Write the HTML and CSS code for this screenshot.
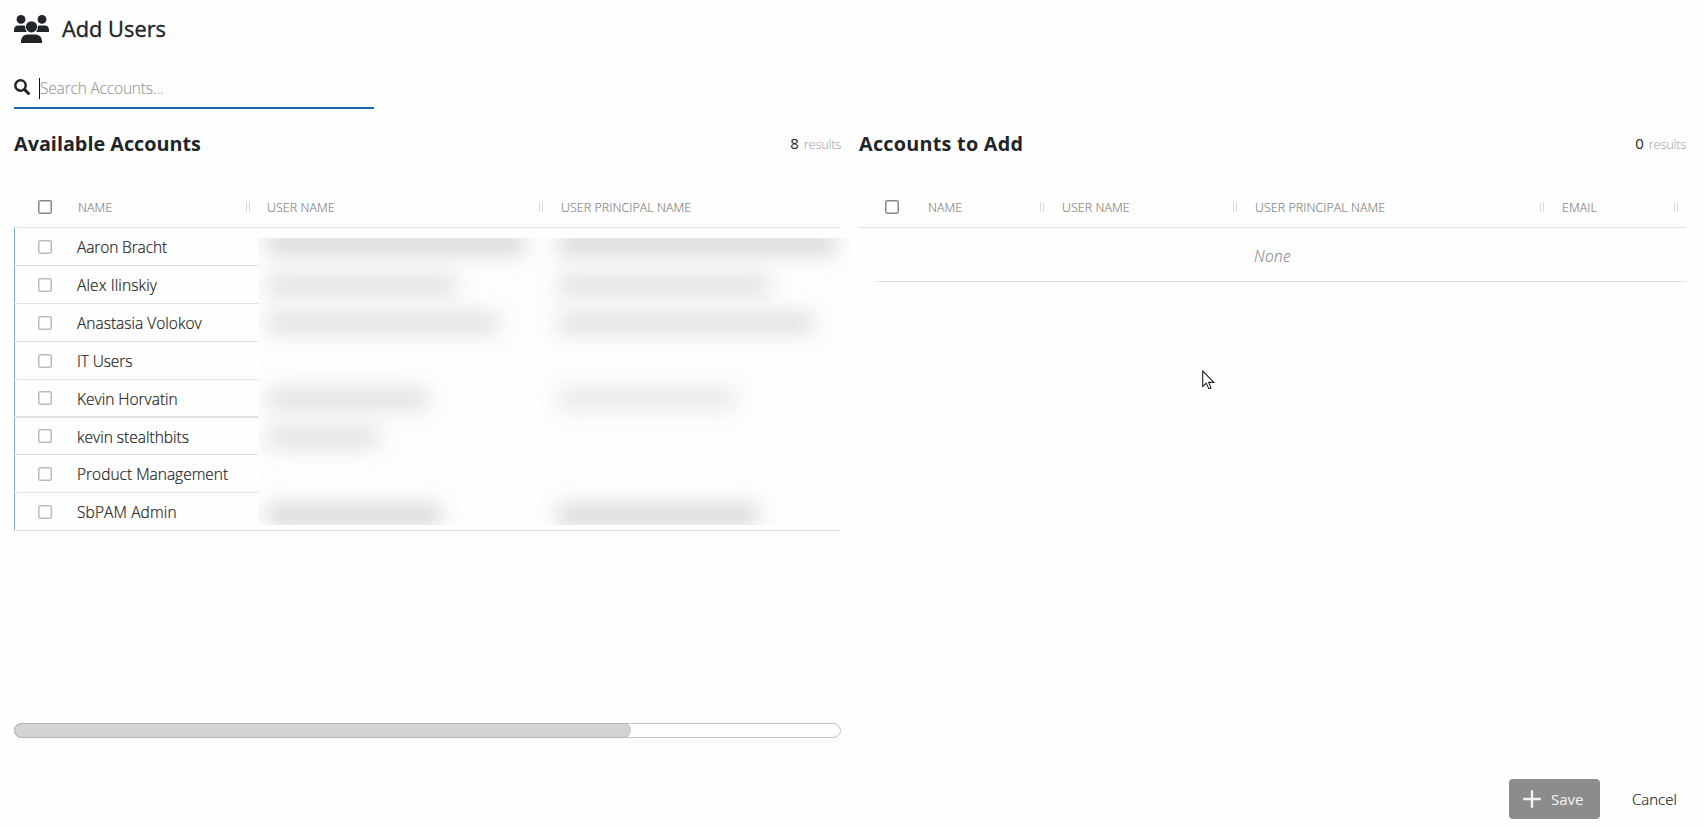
FILE: index.html
```html
<!DOCTYPE html>
<html lang="en">
<head>
<meta charset="utf-8">
<title>Add Users</title>
<link rel="stylesheet" href="styles.css">
</head>
<body>
<main class="page">
  <header class="title-bar">
    <svg class="users-icon" viewBox="0 0 35 28" fill="currentColor">
      <circle cx="7" cy="4.4" r="4.4"/><circle cx="28" cy="4.4" r="4.4"/>
      <path d="M0 17v-2.200A4.600 4.600 0 0 1 4.600 10.400H9.200c.8 0 1.500.2 2.100.5a7 7 0 0 0 1.500 6.100z"/>
      <path d="M35 17v-2.200a4.600 4.600 0 0 0-4.600-4.400h-4.600c-.8 0-1.500.2-2.100.5a7 7 0 0 1-1.500 6.100z"/>
      <circle cx="17.500" cy="11.800" r="5.600"/>
      <path d="M7 28v-2.300a6.500 6.500 0 0 1 6.500-6.300h8a6.500 6.500 0 0 1 6.500 6.300V28z"/>
    </svg>
    <h1 class="title">Add Users</h1>
  </header>
  <div class="search">
    <svg class="search-icon" viewBox="0 0 16 16" fill="none" stroke="currentColor"><circle cx="6.500" cy="6.500" r="5.200" stroke-width="2.500"/><path d="M10.400 10.400L14.500 14.500" stroke-width="3" stroke-linecap="round"/></svg>
    <span class="caret"></span><span class="placeholder">Search Accounts...</span>
  </div>
  <div class="panels">
    <section class="panel">
      <div class="panel-head"><h2 class="panel-title">Available Accounts</h2><span class="count"><b class="num">8</b><span class="results">results</span></span></div>
      <div class="columns columns-left">
        <span class="check dark"></span>
        <span class="col"><span class="label">NAME</span><i class="grip"></i></span>
        <span class="col"><span class="label">USER NAME</span><i class="grip"></i></span>
        <span class="col"><span class="label">USER PRINCIPAL NAME</span></span>
      </div>
      <div class="rows">
        <div class="row"><span class="check"></span><span class="name tight">Aaron Bracht</span></div>
        <div class="row"><span class="check"></span><span class="name wide">Alex Ilinskiy</span></div>
        <div class="row"><span class="check"></span><span class="name">Anastasia Volokov</span></div>
        <div class="row"><span class="check"></span><span class="name tight">IT Users</span></div>
        <div class="row thick"><span class="check"></span><span class="name">Kevin Horvatin</span></div>
        <div class="row short"><span class="check"></span><span class="name">kevin stealthbits</span></div>
        <div class="row"><span class="check"></span><span class="name">Product Management</span></div>
        <div class="row"><span class="check"></span><span class="name wide">SbPAM Admin</span></div>
        <div class="redacted">
          <div class="smudges"><i class="strong" style="width:256px"></i><i class="strong" style="width:276px"></i></div>
          <div class="smudges"><i style="width:188px"></i><i style="width:210px"></i></div>
          <div class="smudges"><i style="width:230px"></i><i style="width:254px"></i></div>
          <div class="smudges"></div>
          <div class="smudges"><i style="width:159px"></i><i class="faint" style="width:176px"></i></div>
          <div class="smudges"><i style="width:110px"></i></div>
          <div class="smudges"></div>
          <div class="smudges last"><i class="strong" style="width:172px"></i><i class="strong" style="width:198px"></i></div>
        </div>
      </div>
      <div class="scrollbar"><div class="thumb"></div></div>
    </section>
    <section class="panel">
      <div class="panel-head"><h2 class="panel-title adding">Accounts to Add</h2><span class="count"><b class="num">0</b><span class="results">results</span></span></div>
      <div class="columns columns-right">
        <span class="check dark"></span>
        <span class="col"><span class="label">NAME</span><i class="grip"></i></span>
        <span class="col"><span class="label">USER NAME</span><i class="grip"></i></span>
        <span class="col"><span class="label">USER PRINCIPAL NAME</span><i class="grip"></i></span>
        <span class="col"><span class="label">EMAIL</span><i class="grip"></i></span>
      </div>
      <div class="empty"><span class="none">None</span></div>
    </section>
  </div>
  <footer class="actions">
    <button class="save"><svg class="plus" viewBox="0 0 18 18"><path d="M9 1.200V16.800M1.200 9H16.800" stroke="currentColor" stroke-width="2.400" stroke-linecap="round"/></svg><span>Save</span></button>
    <button class="cancel"><span>Cancel</span></button>
  </footer>
  <svg class="cursor" viewBox="0 0 13 20"><path d="M.7 1v15.500l3.600-3.400 2.300 5.300q1.400.5 2.300-.8L6.700 12.400h5.200z" fill="#fff" stroke="#222" stroke-width="1.100"/></svg>
</main>
</body>
</html>
```
FILE: styles.css
```css
* { box-sizing: border-box; }
body { margin: 0; background: #fefefe; color: #212529; font: 300 16px/24px "Open Sans", "Noto Sans", sans-serif; overflow: hidden; }
.page { position: relative; width: 1705px; height: 826px; padding: 0 19px 7px 14px; display: flex; flex-direction: column; }
.title-bar { height: 58px; display: flex; align-items: center; gap: 13px; }
.users-icon { width: 35px; height: 28px; }
.title { margin: 0; font-size: 21.800px; font-weight: 400; line-height: 32px; white-space: nowrap; -webkit-text-stroke: .35px currentColor; }
.search { width: 360px; height: 51px; border-bottom: 2px solid #1668ae; display: flex; align-items: center; padding-top: 11px; }
.search-icon { width: 16px; height: 16px; margin-bottom: 2px; }
.caret { width: 1px; height: 21px; margin-left: 9px; background: #111; }
.placeholder { color: #999; font-size: 15.500px; letter-spacing: -.18px; white-space: nowrap; -webkit-text-stroke: .15px currentColor; }
.panels { display: grid; grid-template-columns: 827px 827px; gap: 18px; height: 670px; }
.panel { display: flex; flex-direction: column; }
.panel-head { height: 71px; display: flex; justify-content: space-between; align-items: flex-start; padding-top: 20px; }
.panel-title { margin: 0; font-size: 19.800px; line-height: 30px; font-weight: 700; white-space: nowrap; }
.panel-title.adding { letter-spacing: .25px; }
.count { display: flex; align-items: baseline; gap: 5px; line-height: 28px; }
.num { font-size: 15px; font-weight: 400; }
.results { font-size: 13px; letter-spacing: -.3px; color: #999; }
.columns { display: grid; height: 48px; padding-top: 7px; align-items: center; border-bottom: 1px solid #dfe1e3; font-size: 12.400px; letter-spacing: .08px; color: #777; -webkit-text-stroke: .1px currentColor; }
.columns-left { grid-template-columns: 39px 190px 294px 1fr; padding-left: 24px; }
.columns-left .col:nth-child(2) { padding-left: 1px; padding-right: 17px; }
.columns-right { grid-template-columns: 43px 134px 193px 307px 1fr; padding-left: 26px; }
.col { display: flex; justify-content: space-between; align-items: center; padding-right: 18px; white-space: nowrap; }
.columns-right .col:last-child { padding-right: 8px; }
.label { padding-top: 2px; }
.grip { width: 4px; height: 10px; border: solid #d8d8d8; border-width: 0 1px; }
.check { width: 14px; height: 14px; border: 1.500px solid #bbb; border-radius: 2px; box-shadow: inset 0 0 0 .5px #bbb; }
.check.dark { border-color: #888; box-shadow: inset 0 0 0 .5px #888; }
.rows { position: relative; height: 303px; }
.row { height: 38px; border-bottom: 1px solid #dfe1e3; display: flex; align-items: center; gap: 25px; padding-left: 23px; position: relative; }
.row::before { content: ""; position: absolute; left: 0; top: 0; bottom: 0; width: 1px; background: #7fa9d6; }
.row.thick { border-bottom-width: 2px; }
.row.short { height: 37px; }
.row .check { margin-left: 1px; }
.name { font-size: 15.500px; white-space: nowrap; color: #222; padding-top: 1px; -webkit-text-stroke: .2px currentColor; }
.name.wide { letter-spacing: .12px; }
.name.tight { letter-spacing: -.12px; }
.redacted { position: absolute; left: 244px; top: 10px; width: 592px; height: 287px; overflow: hidden; background: #fdfdfd; }
.smudges { display: grid; grid-template-columns: 291px 1fr; height: 38px; padding-left: 10px; align-items: center; position: relative; top: -10px; }
.smudges i { height: 20px; background: #e0e0e0; filter: blur(10px); }
.smudges .strong { background: #d6d6d6; height: 20px; margin-bottom: 6px; }
.smudges.last .strong { margin: 4px 0 0; }
.smudges .faint { background: #e8e8e8; }
.scrollbar { height: 15px; margin-top: 192px; border: 1px solid #c2c2c2; border-radius: 8px; }
.thumb { width: 617px; height: 15px; margin: -1px; border: 1px solid #b5b5b5; border-right: 0; background: #d3d3d3; border-radius: 8px; }
.empty { height: 54px; margin-left: 17px; border-bottom: 1px solid #dfe1e3; padding: 16px 0 0 378px; }
.none { font-style: italic; color: #777; font-size: 15.500px; letter-spacing: .3px; }
.actions { display: flex; justify-content: flex-end; height: 40px; }
.save, .cancel { font: inherit; border: 0; padding: 0; display: flex; align-items: center; }
.save { width: 91px; height: 40px; border-radius: 4px; background: #8c8c8c; color: #f4f4f4; padding-left: 14px; gap: 10px; font-weight: 400; font-size: 15px; }
.plus { width: 18px; height: 18px; }
.cancel { background: none; width: 86px; height: 40px; padding-left: 32px; color: #222; font-size: 15px; -webkit-text-stroke: .2px currentColor; }
.cursor { position: absolute; left: 1202px; top: 370px; width: 13px; height: 20px; }
```
